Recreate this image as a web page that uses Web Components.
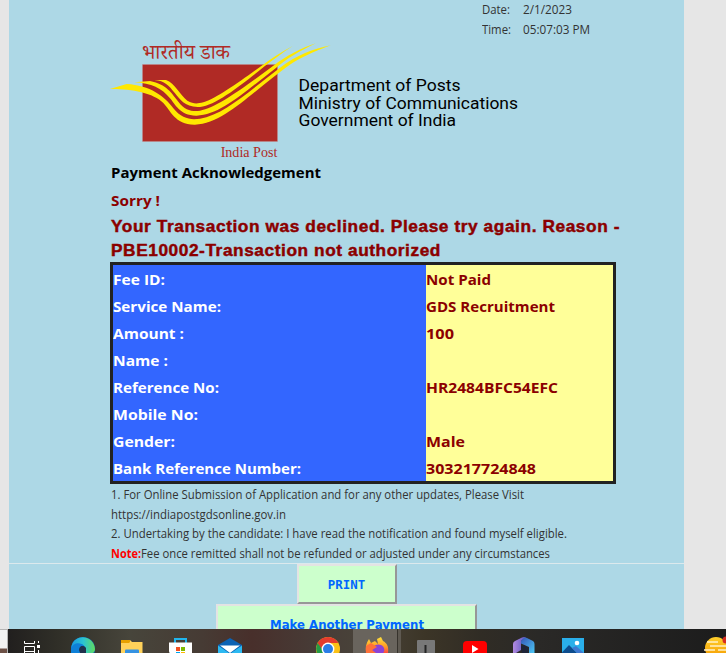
<!DOCTYPE html>
<html lang="en"><head><meta charset="utf-8"><title>Payment Acknowledgement</title>
<style>html,body{margin:0;height:653px;overflow:hidden;background:#e6e6e6}</style></head><body><payment-page></payment-page>
<script>
class FitText extends HTMLElement{
  connectedCallback(){
    const r=this.attachShadow({mode:'open'});
    r.innerHTML='<style>:host{display:block;white-space:pre}span{display:inline-block;transform-origin:0 50%}</style><span><slot></slot></span>';
    const s=r.querySelector('span'),w=+this.getAttribute('w');
    const n=s.getBoundingClientRect().width;
    if(w&&n)s.style.transform='scaleX('+(w/n)+')';
  }
}
class PostLogo extends HTMLElement{
  constructor(){super();this.attachShadow({mode:'open'}).innerHTML=`
<style>:host{display:block;flex:none;width:198px;height:130px}svg{display:block;overflow:visible}</style>
<svg width="240" height="140" viewBox="0 0 720 420">
<text x="126" y="87" textLength="264" lengthAdjust="spacingAndGlyphs" font-family="'Noto Serif Devanagari','Noto Sans Devanagari','Liberation Serif',serif" font-size="60" fill="#b02a25">भारतीय डाक</text>
<rect x="128" y="104" width="404" height="230" fill="#b02a25" stroke="#bc7a7c" stroke-width="2"/>
<g fill="#ffe800">
<path d="M30 177L80 162C150 166 195 199 220 235C245 267 272 270 300 266C370 256 450 182 540 113C590 76 640 56 692 46C640 65 590 87 545 122C450 192 370 280 285 284C225 285 211 240 190 219C160 188 90 176 30 177Z"/>
<path d="M103 157L150 153C200 163 215 190 235 215C255 243 280 245 300 242C350 233 430 174 520 107C560 78 600 55 648 40C600 62 560 86 525 116C430 189 360 255 290 257C240 258 225 222 210 205C185 174 155 160 103 157Z"/>
<path d="M163 150H198C225 160 240 195 262 212C280 222 290 222 310 217C350 205 420 155 485 107C515 85 545 65 578 48C548 68 518 90 490 112C430 160 350 225 300 231C255 234 240 207 225 190C205 165 195 153 163 150Z"/>
</g>
<text x="362" y="381" textLength="170" lengthAdjust="spacingAndGlyphs" font-family="'Liberation Serif',serif" font-size="41" fill="#b02a25">India Post</text>
</svg>`}
}
class DetailRow extends HTMLElement{
  connectedCallback(){
    const a=n=>this.getAttribute(n)||'';
    this.attachShadow({mode:'open'}).innerHTML=`<style>:host{display:grid;grid-template-columns:313px 1fr;height:27px;font:700 15px/29px "Open Sans",sans-serif}
    div{height:27px}.k{background:#36f;color:#fff}.v{background:#ff9;color:#8b0000}</style>
    <div class="k"><fit-text w="${a('kw')}">${a('k')}</fit-text></div><div class="v">${a('v')?`<fit-text w="${a('vw')}">${a('v')}</fit-text>`:''}</div>`;
  }
}
class PushButton extends HTMLElement{
  constructor(){super();this.attachShadow({mode:'open'}).innerHTML=`<style>:host{display:flex;flex:none;box-sizing:border-box;height:40px;background:#cfc;border:2px solid;border-color:#e3e3e3 #979797 #979797 #e3e3e3;justify-content:center;color:#06f;font:700 12.4px/37px "DejaVu Sans",sans-serif}</style><slot></slot>`}
}
class TaskBar extends HTMLElement{
  constructor(){super();this.attachShadow({mode:'open'}).innerHTML=`<style>:host{display:flex;height:24px;width:726px;position:relative}
  .edge{width:7px;height:23px;border-top:1px solid #b5b5b5;border-right:1px solid #b5b5b5;background:linear-gradient(#f2f2f2 18px,#6d5146 19px)}
  svg{display:block}</style>
<div class="edge"></div><svg width="718" height="24" viewBox="8 629 718 24">
<defs>
<linearGradient id="bg"><stop offset="0" stop-color="#211f1e"/><stop offset=".07" stop-color="#302f28"/><stop offset=".17" stop-color="#47453b"/><stop offset=".27" stop-color="#463b34"/><stop offset=".34" stop-color="#482f2b"/><stop offset=".43" stop-color="#473c37"/><stop offset=".5" stop-color="#49443a"/><stop offset=".58" stop-color="#3c3527"/><stop offset=".66" stop-color="#302c25"/><stop offset=".74" stop-color="#2a2927"/><stop offset="1" stop-color="#1c1c1c"/></linearGradient>
<linearGradient id="e1"><stop offset="0" stop-color="#1a9ae0"/><stop offset=".5" stop-color="#2bc3d2"/><stop offset="1" stop-color="#61dc5e"/></linearGradient>
<linearGradient id="m"><stop offset="0" stop-color="#b28ae0"/><stop offset="1" stop-color="#5a55c0"/></linearGradient>
<linearGradient id="m2" x2="1" y2="1"><stop offset="0" stop-color="#3555b8"/><stop offset="1" stop-color="#4cc8f5"/></linearGradient>
<linearGradient id="f" x2="0" y2="1"><stop offset="0" stop-color="#ffe23c"/><stop offset=".6" stop-color="#ff9b25"/><stop offset="1" stop-color="#ff4a40"/></linearGradient>
<linearGradient id="y" x2="0" y2="1"><stop offset="0" stop-color="#ffcf2b"/><stop offset="1" stop-color="#f59a00"/></linearGradient>
</defs>
<rect x="8" y="629" width="718" height="24" fill="url(#bg)"/>
<rect x="353" y="629" width="44" height="24" fill="#69645d"/><rect x="397" y="629" width="1" height="24" fill="#37332d"/><rect x="398" y="629" width="3" height="24" fill="#5e5951"/>
<g fill="none" stroke="#fff"><path d="M24.500 641v2.500h10V641M24.500 653v-6.500h10v6.500M24.500 651.500h10M38.500 641v2M38.500 650v3"/></g><rect x="37" y="645" width="3" height="3" fill="#fff"/>
<circle cx="83" cy="649" r="12" fill="#0f6fc6"/><path d="M71.500 646C75 633 94 635 95 649C95 653 91 655 85 653C88 649 84 643 78 644C75 644 73 646 71.500 649Z" fill="url(#e1)"/><path d="M80 653C77 647 82 643 86 648V653Z" fill="#20304b"/><path d="M71 649C73 642 81 642 84 646C79 645 78 650 80 653H71Z" fill="#0e80d8"/>
<path d="M121 640h9l2 2h10.500v11H121Z" fill="#ffd25a"/><path d="M121 640h9v2l-1 1h-8Z" fill="#e7a100"/><path d="M125 653v-2.500q0-1 1-1h12q1 0 1 1v2.500Z" fill="#3592e2"/>
<path d="M175 643v-4h11v4" stroke="#21b5ed" stroke-width="2" fill="none"/><path d="M169 642.500h23v10.500h-22q-1 0-1-2Z" fill="#fff"/><path fill="#f25022" d="M176 647h4v4h-4z"/><path fill="#7fba00" d="M181 647h4v4h-4z"/><path fill="#00a4ef" d="M176 652h4v1h-4z"/><path fill="#ffb900" d="M181 652h4v1h-4z"/>
<path d="M218 645L230 638L242 645V653H218Z" fill="#0b62b4"/><path d="M220 645.500H240L230 653Z" fill="#fff"/><path d="M218 645.500L229 653H218ZM242 645.500L231 653H242Z" fill="#2cb9f2"/>
<circle cx="328" cy="649" r="12" fill="#fbc116"/><path d="M317.600 643A12 12 0 0 1 338.400 643H328L322.500 652Z" fill="#e33b2e"/><path d="M317.600 643A12 12 0 0 0 317 653H325Z" fill="#259b45"/><circle cx="328" cy="649" r="6.400" fill="#fff"/><circle cx="328" cy="649" r="5" fill="#2a7de8"/>
<path d="M366 653C365 648 366 643 369 639L371 643L375 641L378 644L377 639L381 637L383 641C387 643 389 647 388 653Z" fill="url(#f)"/><path d="M373 653C370 647 376 643 381 645C385 647 385 651 383 653Z" fill="#8b43d6"/><path d="M366 646L371 643L377 647L372 650L376 653H366Z" fill="#ff7139"/>
<rect x="417" y="640" width="18" height="14" rx="1" fill="#787878"/><path d="M425.500 645v8" stroke="#252525" stroke-width="2"/>
<rect x="463" y="641" width="24" height="16" rx="4" fill="#f00"/><path d="M472 645l6.500 4-6.500 4Z" fill="#fff"/>
<path d="M513 644Q513 642 515 641L522 637.500Q524 636.500 526 637.500L521 641V650L516 653H513Z" fill="url(#m)"/><path d="M521 641Q524 636 527 638L533 641Q534.500 642 534.500 644V653H529V647L521 643.500Z" fill="url(#m2)"/><path d="M521 646.500L524 645L528 648V653H522Z" fill="#1e2438"/>
<rect x="562" y="638" width="22" height="15" fill="#2aafea"/><path d="M562 652.500L569 645L577 653H562Z" fill="#0c4c8d"/><path d="M572 648L576 646L584 653H577Z" fill="#3f79d1"/><circle cx="577" cy="643" r="2.300" fill="#fff"/>
<circle cx="716" cy="648" r="11" fill="url(#y)"/><path d="M707 642h11M710 646h16M704 650h11M718 650h8" stroke="#fff0c5" stroke-width="1.300"/><circle cx="726" cy="640" r="3.500" fill="#d62c22"/>
</svg>`}
}
class PaymentPage extends HTMLElement{
  constructor(){super();this.attachShadow({mode:'open'}).innerHTML=`
<style>
:host{display:block;height:653px;background:#e6e6e6}
main{box-sizing:border-box;margin-left:9px;width:675px;height:629px;background:#add8e6}
.date{display:grid;grid-template-columns:41px 1fr;padding-left:473px;height:30px;font:12px/20px "Open Sans",sans-serif;color:#333;grid-auto-rows:20px}
.head{display:flex;height:130px;padding-left:91px}
.dept{padding-top:47px;font:17px/17.500px Roboto,sans-serif;color:#000;transform:translateX(.5px)}
.body{padding-left:101px}
h1,h2{margin:0;padding-left:.5px;font:700 15px/24px "Open Sans",sans-serif;color:#000}
h2{color:#8b0000;height:31px;line-height:32px}
.err{height:47px;padding-left:1px;font:700 16.700px/24px "Liberation Sans",sans-serif;letter-spacing:.55px;color:#8b0000;-webkit-text-stroke:.45px #8b0000}
.tbl{box-sizing:border-box;width:506px;height:222px;border:3px solid #222}
.notes{font:12px/19.700px "Open Sans",sans-serif;color:#333;padding-top:1px;padding-left:.5px;height:78px}
.note{display:flex}.note b{color:red;display:block;width:30px}
.actions{border-top:1px solid #dce9ed;display:flex;flex-direction:column;align-items:center}
.print{width:100px;font-family:"DejaVu Sans Mono",monospace}.again{width:261px}
</style>
<main>
<div class="date"><fit-text w="28">Date:</fit-text><fit-text w="49">2/1/2023</fit-text><fit-text w="29">Time:</fit-text><fit-text w="67">05:07:03 PM</fit-text></div>
<div class="head"><post-logo></post-logo><div class="dept"><fit-text w="162">Department of Posts</fit-text><fit-text w="219.5">Ministry of Communications</fit-text><fit-text w="157.5">Government of India</fit-text></div></div>
<div class="body">
<h1><fit-text w="210">Payment Acknowledgement</fit-text></h1>
<h2><fit-text w="49">Sorry !</fit-text></h2>
<div class="err"><fit-text w="509">Your Transaction was declined. Please try again. Reason -</fit-text><fit-text w="330">PBE10002-Transaction not authorized</fit-text></div>
<div class="tbl">
<detail-row k="Fee ID:" kw="52" v="Not Paid" vw="65"></detail-row>
<detail-row k="Service Name:" kw="108" v="GDS Recruitment" vw="129"></detail-row>
<detail-row k="Amount :" kw="71" v="100" vw="28"></detail-row>
<detail-row k="Name :" kw="55"></detail-row>
<detail-row k="Reference No:" kw="106" v="HR2484BFC54EFC" vw="132"></detail-row>
<detail-row k="Mobile No:" kw="85"></detail-row>
<detail-row k="Gender:" kw="62" v="Male" vw="39"></detail-row>
<detail-row k="Bank Reference Number:" kw="188" v="303217724848" vw="110"></detail-row>
</div>
<div class="notes"><fit-text w="413">1. For Online Submission of Application and for any other updates, Please Visit</fit-text><fit-text w="175">https://indiapostgdsonline.gov.in</fit-text><fit-text w="456">2. Undertaking by the candidate: I have read the notification and found myself eligible.</fit-text><div class="note"><b><fit-text w="30">Note:</fit-text></b><fit-text w="409">Fee once remitted shall not be refunded or adjusted under any circumstances</fit-text></div></div>
</div>
<div class="actions"><push-button class="print">PRINT</push-button><push-button class="again"><fit-text w="154" style="width:154px">Make Another Payment</fit-text></push-button></div>
</main><task-bar></task-bar>`}
}
customElements.define('fit-text',FitText);
customElements.define('post-logo',PostLogo);
customElements.define('detail-row',DetailRow);
customElements.define('push-button',PushButton);
customElements.define('task-bar',TaskBar);
customElements.define('payment-page',PaymentPage);
</script></body></html>
